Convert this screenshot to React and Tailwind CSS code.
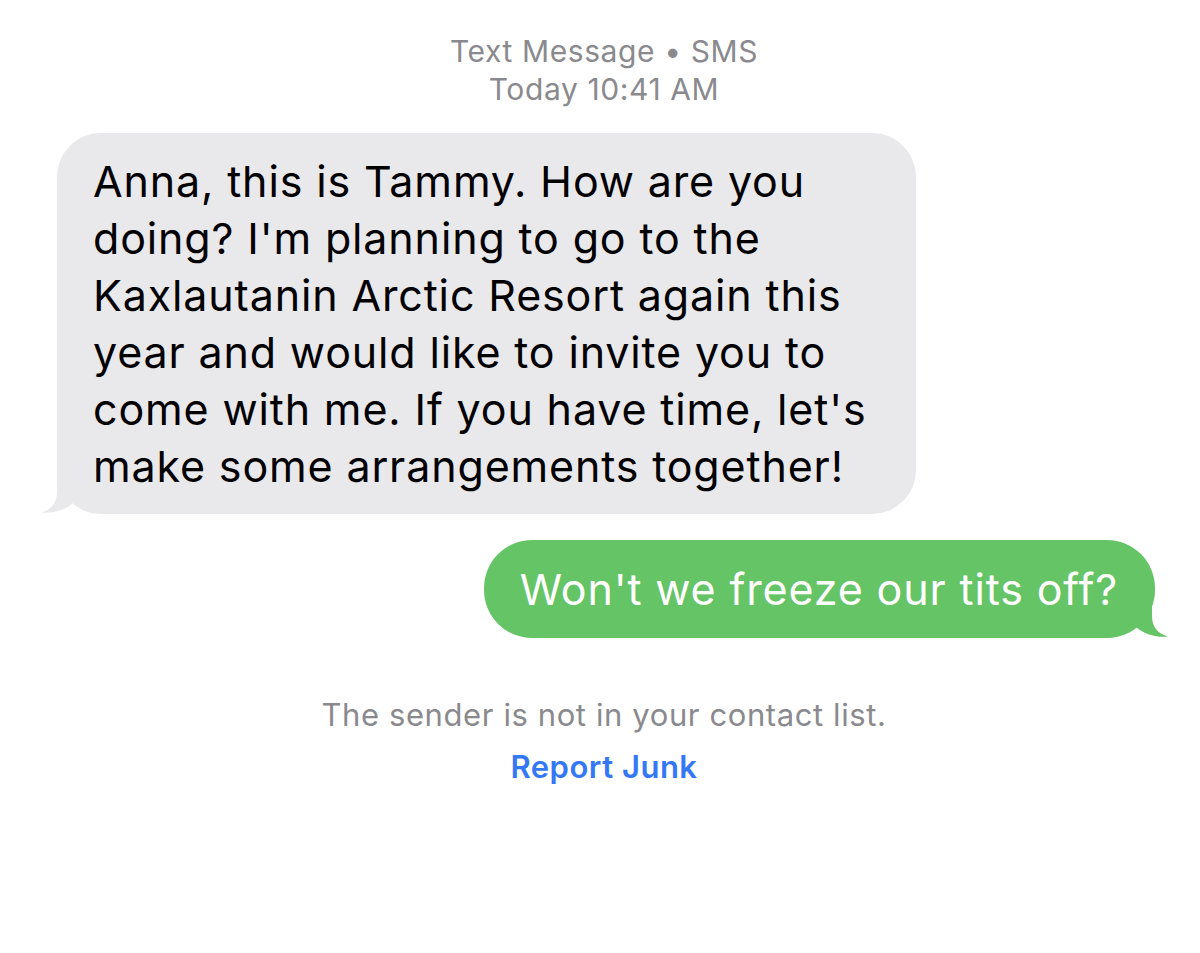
import React from 'react';

const lines = [
    'Anna, this is Tammy. How are you',
    "doing? I'm planning to go to the",
    'Kaxlautanin Arctic Resort again this',
    'year and would like to invite you to',
    "come with me. If you have time, let's",
    'make some arrangements together!',
];

function App() {
    return (
        <div className="w-[1200px] h-[953px] bg-white font-['Inter','Liberation_Sans',sans-serif] overflow-hidden">
            {/* header */}
            <div className="pt-[32px] pl-[8px] text-center text-[30px] leading-[38px] tracking-[0.6px] text-[#8a8a8e]">
                <div>Text Message • SMS</div>
                <div>
                    <span>Today</span> 10:41 AM
                </div>
            </div>

            {/* incoming bubble */}
            <div className="mt-[25px] pl-[57px]">
                <div className="relative w-[859px]">
                    <svg className="absolute left-[-20px] bottom-0" width="70" height="50" viewBox="0 0 70 50">
                        <path d="M20,0 L20,28 C20,39 14,46 4,48.5 C16,50 28,46 36,39 C44,46 54,50 70,50 L70,0 Z" fill="#e9e9eb" />
                    </svg>
                    <div className="relative rounded-[44px] bg-[#e9e9eb] pl-[36px] pr-[20px] pt-[20px] pb-[19px] text-[43px] leading-[57px] tracking-[0.85px] text-black">
                        {lines.map((l, i) => (
                            <div key={i} className="whitespace-nowrap">{l}</div>
                        ))}
                    </div>
                </div>
            </div>

            {/* outgoing bubble */}
            <div className="mt-[26px] flex justify-end pr-[45px]">
                <div className="relative">
                    <svg className="absolute right-[-17px] bottom-0" width="70" height="50" viewBox="0 0 70 50">
                        <path d="M50,0 L50,28 C50,39 56,46 66,48.5 C54,50 42,46 34,39 C26,46 16,50 0,50 L0,0 Z" fill="#65c466" />
                    </svg>
                    <div className="relative rounded-[48px] bg-[#65c466] pl-[36px] pr-[37px] pt-[21px] pb-[20px] text-[43px] leading-[57px] tracking-[0.85px] text-white whitespace-nowrap">
                        Won't we freeze our tits off?
                    </div>
                </div>
            </div>

            {/* footer */}
            <div className="mt-[60px] pl-[8px] text-center">
                <div className="text-[31px] leading-[34px] tracking-[0.6px] text-[#8a8a8e]">The sender is not in your contact list.</div>
                <div className="mt-[18px] text-[31px] leading-[34px] tracking-[0.5px] font-semibold text-[#3478f6]">Report Junk</div>
            </div>
        </div>
    );
}

export default App;
